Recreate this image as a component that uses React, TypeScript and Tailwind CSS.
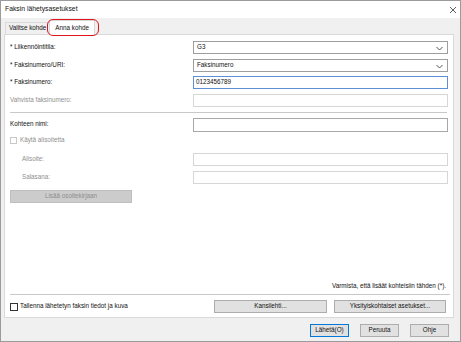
import React from "react";

const Chevron = () => (
  <svg width="7" height="5" viewBox="0 0 7 5" className="absolute right-[4px] top-[4px]">
    <path d="M0.5 1 L3.5 4 L6.5 1" fill="none" stroke="#444" strokeWidth="0.9" />
  </svg>
);

function Row({ label, disabled, indent, children, mt }: { label: string; disabled?: boolean; indent?: boolean; children: React.ReactNode; mt: string }) {
  return (
    <div className={`flex items-center h-[13px] ${mt}`}>
      <div className={`w-[183px] ${indent ? "pl-[12px]" : ""} ${disabled ? "text-[#8f8f8f]" : "text-[#111]"}`}>{label}</div>
      <div className="w-[255px] h-full">{children}</div>
    </div>
  );
}

export default function App() {
  return (
    <div
      className="w-[461px] h-[342px] bg-[#f0f0f0] border border-[#9b9b9b] flex flex-col text-[6.3px] leading-none overflow-hidden"
      style={{ fontFamily: '"Liberation Sans", Arial, sans-serif' }}
    >
      {/* title bar */}
      <div className="h-[17px] bg-white flex items-center justify-between pl-[4px] pr-[3px] shrink-0">
        <span className="text-[6.8px] text-[#111]">Faksin lähetysasetukset</span>
        <svg width="8" height="8" viewBox="0 0 8 8">
          <path d="M1 1 L7 7 M7 1 L1 7" stroke="#333" strokeWidth="0.8" />
        </svg>
      </div>

      {/* tabs */}
      <div className="h-[16px] flex items-end pl-[4px] shrink-0 relative">
        <div className="h-[12px] px-[3px] flex items-center border-t border-l border-[#d9d9d9] text-[#111]">Valitse kohde</div>
        <div className="h-[15px] px-[5px] flex items-center bg-white border-t border-l border-r border-[#d9d9d9] text-[#111] -mb-px relative z-10">
          Anna kohde
        </div>
        <div className="absolute left-[46px] top-[1px] w-[52px] h-[17px] rounded-[6px] border-[1.5px] border-[#e0151b] z-20" />
      </div>

      {/* panel */}
      <div className="ml-[3px] mr-[6px] h-[284px] bg-white border border-[#d9d9d9] flex flex-col px-[5px] shrink-0">
        <Row label="* Liikennöintitila:" mt="mt-[6px]">
          <div className="relative h-full border border-[#9e9e9e] bg-white flex items-center pl-[3px] text-[#111]">
            G3
            <Chevron />
          </div>
        </Row>
        <Row label="* Faksinumero/URI:" mt="mt-[4.5px]">
          <div className="relative h-full border border-[#9e9e9e] bg-white flex items-center pl-[3px] text-[#111]">
            Faksinumero
            <Chevron />
          </div>
        </Row>
        <Row label="* Faksinumero:" mt="mt-[4.5px]">
          <div className="h-full border border-[#5c8fd6] bg-white flex items-center pl-[2px] text-[#111]">0123456789</div>
        </Row>
        <Row label="Vahvista faksinumero:" disabled mt="mt-[4.5px]">
          <div className="h-full border border-[#d6d6d6] bg-white" />
        </Row>
        <div className="h-px bg-[#c8c8c8] mt-[5.5px] w-[437px]" />
        <div className="flex items-center h-[14px] mt-[4.5px]">
          <div className="w-[183px] text-[#111]">Kohteen nimi:</div>
          <div className="w-[255px] h-full border border-[#a8a8a8] bg-white" />
        </div>
        <div className="flex items-center h-[10px] mt-[4px] text-[#8f8f8f]">
          <div className="w-[7px] h-[7px] border border-[#c8c8c8] mr-[3px]" />
          Käytä alisoitetta
        </div>
        <Row label="Alisoite:" disabled indent mt="mt-[7px]">
          <div className="h-full border border-[#d6d6d6] bg-white" />
        </Row>
        <Row label="Salasana:" disabled indent mt="mt-[5px]">
          <div className="h-full border border-[#d6d6d6] bg-white" />
        </Row>
        <div className="mt-[6px] w-[122px] h-[13px] bg-[#cccccc] border border-[#bfbfbf] flex items-center justify-center text-[#8c8c8c]">
          Lisää osoitekirjaan
        </div>

        <div className="flex-1" />
        <div className="flex justify-end pr-[2px] text-[#111]">Varmista, että lisäät kohteisiin tähden (*).</div>
        <div className="h-px bg-[#c8c8c8] mt-[5px] w-[440px]" />
        <div className="flex items-center h-[13px] mt-[5px] mb-[4px]">
          <div className="flex items-center flex-1 text-[#111]">
            <div className="w-[8px] h-[8px] border border-[#333] mr-[2px] bg-white" />
            Tallenna lähetetyn faksin tiedot ja kuva
          </div>
          <div className="w-[113px] h-full bg-[#e1e1e1] border border-[#adadad] flex items-center justify-center text-[#111]">Kansilehti...</div>
          <div className="w-[112px] h-full ml-[7px] mr-[2px] bg-[#e1e1e1] border border-[#adadad] flex items-center justify-center text-[#111]">
            Yksityiskohtaiset asetukset...
          </div>
        </div>
      </div>

      {/* bottom buttons */}
      <div className="flex justify-end gap-[11px] pr-[11px] mt-[6px]">
        <div className="w-[39px] h-[13px] bg-[#e1e1e1] border border-[#0078d7] flex items-center justify-center text-[#111]">Lähetä(O)</div>
        <div className="w-[39px] h-[13px] bg-[#e1e1e1] border border-[#adadad] flex items-center justify-center text-[#111]">Peruuta</div>
        <div className="w-[39px] h-[13px] bg-[#e1e1e1] border border-[#adadad] flex items-center justify-center text-[#111]">Ohje</div>
      </div>
    </div>
  );
}
